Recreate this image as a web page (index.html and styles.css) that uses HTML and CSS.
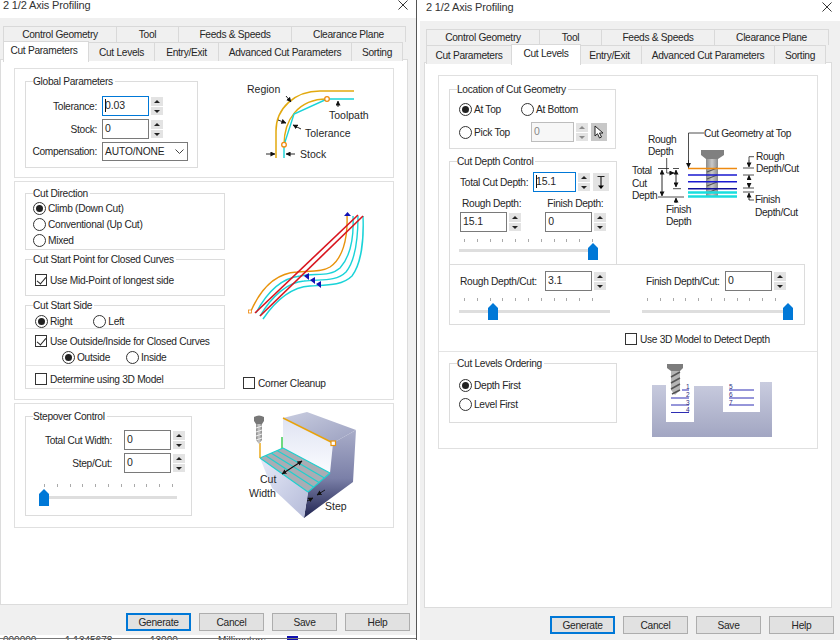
FILE: index.html
```html
<!DOCTYPE html>
<html lang="en">
<head>
<meta charset="utf-8">
<title>2 1/2 Axis Profiling</title>
<link rel="stylesheet" href="styles.css">
</head>
<body>
<div class="desktop">

  <section class="window win-a">
    <header class="titlebar"><span class="title">2 1/2 Axis Profiling</span>
      <svg class="close" viewBox="0 0 11 11"><path d="M0.5 0.5L10.5 10.5M10.5 0.5L0.5 10.5"/></svg>
    </header>
    <div class="body">
      <div class="tabs">
        <div class="tab-row row-back">
          <span class="tab t-control">Control Geometry</span><span class="tab t-tool">Tool</span><span class="tab t-feeds">Feeds &amp; Speeds</span><span class="tab t-clear">Clearance Plane</span>
        </div>
        <div class="tab-row row-front">
          <span class="tab t-cut active">Cut Parameters</span><span class="tab t-levels">Cut Levels</span><span class="tab t-entry">Entry/Exit</span><span class="tab t-adv">Advanced Cut Parameters</span><span class="tab t-sort">Sorting</span>
        </div>
      </div>
      <div class="panel panel-a">
        <div class="section s-global">
          <div class="group g-global">
            <span class="legend">Global Parameters</span>
            <div class="form-grid">
              <label>Tolerance:</label><div class="num"><span class="input focus"><i class="caret"></i>0.03</span><span class="spin"><b class="up"></b><b class="down"></b></span></div>
              <label>Stock:</label><div class="num"><span class="input">0</span><span class="spin"><b class="up"></b><b class="down"></b></span></div>
              <label>Compensation:</label><div class="select">AUTO/NONE<svg viewBox="0 0 9 5"><path d="M0.5 0.5L4.5 4.5L8.5 0.5"/></svg></div>
            </div>
          </div>
          <svg class="art art-region" viewBox="240 75 145 95">
            <defs>
              <marker id="ah" viewBox="0 0 6 6" refX="5.5" refY="3" markerWidth="5" markerHeight="5" markerUnits="userSpaceOnUse" orient="auto-start-reverse"><path d="M0 0L6 3L0 6Z" fill="#111"/></marker>
              <linearGradient id="gTop" x1="0" y1="0" x2="1" y2="1"><stop offset="0" stop-color="#c9cde0"/><stop offset="1" stop-color="#9ba0c0"/></linearGradient>
              <linearGradient id="gFace" x1="0" y1="0" x2="0" y2="1"><stop offset="0" stop-color="#dfe3f2"/><stop offset="1" stop-color="#fbfcff"/></linearGradient>
              <linearGradient id="gLow" x1="0" y1="0" x2="1" y2="1"><stop offset="0" stop-color="#e6eaf8"/><stop offset="1" stop-color="#b4bad8"/></linearGradient>
              <linearGradient id="gSide" x1="0" y1="0" x2="0" y2="1"><stop offset="0" stop-color="#a9adc9"/><stop offset="0.55" stop-color="#7b80a8"/><stop offset="1" stop-color="#1f2350"/></linearGradient>
              <linearGradient id="gBlock" x1="0" y1="0" x2="0" y2="1"><stop offset="0" stop-color="#c9ccdf"/><stop offset="1" stop-color="#a2a6c2"/></linearGradient>
              <linearGradient id="gMetal" x1="0" y1="0" x2="1" y2="0"><stop offset="0" stop-color="#8a8a8a"/><stop offset="0.5" stop-color="#c9c9c9"/><stop offset="1" stop-color="#8a8a8a"/></linearGradient>
            </defs>
            <path class="or" d="M276 158V131C276 108 295 91 320 91H354"/>
            <path class="or" d="M284 145C284 120 298 99 327 99"/>
            <path class="cy" d="M284 158V145L294 114L327 99H354"/>
            <circle class="pt" cx="284" cy="144.7" r="2.3"/><circle class="pt" cx="327" cy="99" r="2.3"/>
            <path class="ar" d="M286 96L291 102"/><path class="ar" d="M278 120L286 123"/><path class="ar" d="M301 129L293 125"/><path class="ar" d="M338 107V101"/><path class="ar" d="M266 154H275"/><path class="ar" d="M295 154H286"/>
            <text x="247" y="93">Region</text><text x="329" y="119">Toolpath</text><text x="305" y="137">Tolerance</text><text x="300" y="158">Stock</text>
          </svg>
        </div>

        <div class="section s-dir">
          <div class="col-groups">
            <div class="group g-dir">
              <span class="legend">Cut Direction</span>
              <div class="opt"><i class="radio on"></i>Climb (Down Cut)</div>
              <div class="opt"><i class="radio"></i>Conventional (Up Cut)</div>
              <div class="opt"><i class="radio"></i>Mixed</div>
            </div>
            <div class="group g-start">
              <span class="legend">Cut Start Point for Closed Curves</span>
              <div class="opt"><i class="check on"></i>Use Mid-Point of longest side</div>
            </div>
            <div class="group g-side">
              <span class="legend">Cut Start Side</span>
              <div class="side-a">
                <span class="opt"><i class="radio on"></i>Right</span><span class="opt"><i class="radio"></i>Left</span>
              </div>
              <div class="side-b">
                <div class="opt"><i class="check on"></i>Use Outside/Inside for Closed Curves</div>
                <div class="side-sub"><span class="opt"><i class="radio on"></i>Outside</span><span class="opt"><i class="radio"></i>Inside</span></div>
              </div>
              <div class="side-c"><div class="opt"><i class="check"></i>Determine using 3D Model</div></div>
            </div>
          </div>
          <div class="col-art">
            <svg class="art art-curve" viewBox="243 205 130 125">
              <path class="cy" d="M256 313C268 290 282 278 300 276C316 273 330 277 340 268C350 257 354 238 353 216"/>
              <path class="cy" d="M260 316C272 296 288 282 304 281C320 279 336 282 346 272C355 261 358 240 358 216"/>
              <path class="cy" d="M263 319C276 300 292 287 310 286C326 285 342 286 352 276C361 264 364 240 363 216"/>
              <path class="orl" d="M251 311C262 286 278 273 297 272C310 271 322 272 330 267C342 259 348 240 347 215"/>
              <rect class="sq" x="248.5" y="310" width="3" height="3"/>
              <path class="rd" d="M255 313L358 215"/><path class="rd" d="M260 316L363 216"/>
              <path class="bl" d="M347.5 212L351 216H344Z"/><path class="bl" d="M304 276L309 273V280Z"/><path class="bl" d="M310 280L315 277V284Z"/><path class="bl" d="M316 284L321 281V288Z"/>
            </svg>
            <div class="opt corner"><i class="check"></i>Corner Cleanup</div>
          </div>
        </div>

        <div class="section s-step">
          <div class="group g-step">
            <span class="legend">Stepover Control</span>
            <div class="form-grid wide">
              <label>Total Cut Width:</label><div class="num"><span class="input">0</span><span class="spin"><b class="up"></b><b class="down"></b></span></div>
              <label>Step/Cut:</label><div class="num"><span class="input">0</span><span class="spin"><b class="up"></b><b class="down"></b></span></div>
            </div>
            <div class="slider sl-step"><i class="ticks"></i><i class="track"></i><i class="thumb"></i></div>
          </div>
          <svg class="art art-stair" viewBox="240 410 125 115">
            <path fill="url(#gTop)" d="M283 418L307 412L356 430L333 443Z"/>
            <path fill="url(#gFace)" d="M283 418L333 443L330 473L283 448Z"/>
            <path fill="url(#gSide)" d="M333 443L356 430L353 482L304 518L308 492L330 473Z"/>
            <path fill="url(#gLow)" d="M260 458L308 492L304 518L272 488Z"/>
            <path fill="#a9adb4" d="M260 458L283 448L330 473L308 492Z"/>
            <path class="st" d="M260 458L308 492M265.500 455.500L313.500 487M271 453L319 482.500M277 450.500L324.500 478M283 448L330 473M260 458L283 448M308 492L330 473"/>
            <path class="orw" d="M283 418L333 443"/><rect class="sq2" x="331" y="441" width="4.5" height="4.5"/>
            <path class="orw" d="M260 443V458"/><path class="gr" d="M282 437V448"/>
            <path fill="#777" d="M254 417Q259 414 264 417V421L262 424H256L254 421Z"/>
            <path fill="url(#gMetal)" d="M256 424H262V440L259 444L256 440Z"/>
            <path class="fl" d="M256 428L262 426M256 432L262 430M256 436L262 434M256 440L262 438"/>
            <path class="ar bold" d="M282 474L302 461" marker-start="url(#ah)"/><path class="ar" d="M307 501L313 498" /><path class="ar" d="M325 490L317 495"/>
            <text x="260" y="483">Cut</text><text x="249" y="497">Width</text><text x="325" y="510">Step</text>
          </svg>
        </div>
      </div>
      <div class="actions">
        <button class="btn default">Generate</button><button class="btn">Cancel</button><button class="btn">Save</button><button class="btn">Help</button>
      </div>
    </div>
    <div class="strip"><span class="f1">000000</span><span class="f2">1.1345678</span><span class="f3">13000</span><span class="f4">Millimeters</span><i class="swatch"></i></div>
  </section>

  <section class="window win-b">
    <header class="titlebar"><span class="title">2 1/2 Axis Profiling</span>
      <svg class="close" viewBox="0 0 11 11"><path d="M0.5 0.5L10.5 10.5M10.5 0.5L0.5 10.5"/></svg>
    </header>
    <div class="body">
      <div class="tabs">
        <div class="tab-row row-back">
          <span class="tab t-control">Control Geometry</span><span class="tab t-tool">Tool</span><span class="tab t-feeds">Feeds &amp; Speeds</span><span class="tab t-clear">Clearance Plane</span>
        </div>
        <div class="tab-row row-front">
          <span class="tab t-cut">Cut Parameters</span><span class="tab t-levels active">Cut Levels</span><span class="tab t-entry">Entry/Exit</span><span class="tab t-adv">Advanced Cut Parameters</span><span class="tab t-sort">Sorting</span>
        </div>
      </div>
      <div class="panel panel-b">
        <div class="section s-levels">
          <div class="levels-top">
            <div class="levels-left">
              <div class="group g-loc">
                <span class="legend">Location of Cut Geometry</span>
                <div class="loc-row">
                  <span class="opt"><i class="radio on"></i>At Top</span><span class="opt at-bottom"><i class="radio"></i>At Bottom</span>
                </div>
                <div class="loc-row pick">
                  <span class="opt"><i class="radio"></i>Pick Top</span>
                  <div class="num pick-num"><span class="input off">0</span><span class="spin off"><b class="up"></b><b class="down"></b></span></div>
                  <span class="tool-btn dark"><svg viewBox="0 0 12 15"><path d="M2 1V11L4.5 8.7L6.5 13L8.5 12L6.5 8H10Z"/></svg></span>
                </div>
              </div>
              <div class="group g-depth">
                <span class="legend">Cut Depth Control</span>
                <div class="depth-total">
                  <label>Total Cut Depth:</label>
                  <div class="num"><span class="input focus short"><i class="caret"></i>15.1</span><span class="spin"><b class="up"></b><b class="down"></b></span></div>
                  <span class="tool-btn"><svg viewBox="0 0 12 15"><path d="M2.5 1.5H9.5M6 1.5V11" class="tline"/><path d="M3 10.5H9L6 14Z"/></svg></span>
                </div>
                <div class="depth-pair">
                  <div class="stack"><label>Rough Depth:</label><div class="num"><span class="input">15.1</span><span class="spin"><b class="up"></b><b class="down"></b></span></div></div>
                  <div class="stack"><label>Finish Depth:</label><div class="num"><span class="input">0</span><span class="spin"><b class="up"></b><b class="down"></b></span></div></div>
                </div>
                <div class="slider sl-depth"><i class="ticks"></i><i class="track"></i><i class="thumb"></i></div>
              </div>
            </div>
            <svg class="art art-depth" viewBox="625 125 190 110">
              <rect fill="url(#gMetal)" x="705" y="158" width="12" height="38"/>
              <path fill="#808080" d="M700 150H723V155L717 159H705L700 155Z"/>
              <path class="fl2" d="M706 172L716 168M706 179L716 175M706 186L716 182M706 193L716 189"/>
              <path class="l-cy" d="M687 192.500H736M687 196.500H736"/>
              <path class="l-or" d="M687 168.500H736"/>
              <path class="l-bl" d="M687 175H736M687 181.700H736"/><path class="l-nv" d="M687 188.700H736"/>
              <path class="th" d="M657 168.500H668M672 168.500H678M672 188.700H680M657 197H683M665.700 158V173H670M703 133H687.500V160"/>
              <path class="ar" d="M661 170V196" marker-start="url(#ah)"/>
              <path class="ar" d="M675 170V187" marker-start="url(#ah)"/>
              <path class="ar" d="M669 173H673"/><path class="ar" d="M687.500 160V167.500"/><path class="ar" d="M675 203V198"/>
              <path class="th" d="M742 168H753M742 175H753M742 188H753M742 192H753M753 156.700H748V160M748 200H753"/>
              <path class="ar" d="M748 160V167"/><path class="ar" d="M748 178V175.500" /><path class="ar" d="M748 184V187.500"/><path class="ar" d="M748 200V193"/>
              <g class="tight">
                <text x="703" y="137">Cut Geometry at Top</text>
                <text x="647" y="143">Rough</text><text x="647" y="155">Depth</text>
                <text x="631" y="174">Total</text><text x="631" y="187">Cut</text><text x="631" y="199">Depth</text>
                <text x="665" y="213">Finish</text><text x="665" y="225">Depth</text>
                <text x="755" y="160">Rough</text><text x="755" y="172">Depth/Cut</text>
                <text x="754" y="203">Finish</text><text x="754" y="216">Depth/Cut</text>
              </g>
            </svg>
          </div>
          <div class="group g-cut">
            <div class="cut-col">
              <div class="cut-row"><label>Rough Depth/Cut:</label><div class="num"><span class="input">3.1</span><span class="spin"><b class="up"></b><b class="down"></b></span></div></div>
              <div class="slider sl-rough"><i class="ticks"></i><i class="track"></i><i class="thumb"></i></div>
            </div>
            <div class="cut-col">
              <div class="cut-row"><label>Finish Depth/Cut:</label><div class="num"><span class="input">0</span><span class="spin"><b class="up"></b><b class="down"></b></span></div></div>
              <div class="slider sl-finish"><i class="ticks"></i><i class="track"></i><i class="thumb"></i></div>
            </div>
          </div>
          <div class="opt detect"><i class="check"></i>Use 3D Model to Detect Depth</div>
          <div class="levels-bottom">
            <div class="group g-order">
              <span class="legend">Cut Levels Ordering</span>
              <div class="opt"><i class="radio on"></i>Depth First</div>
              <div class="opt"><i class="radio"></i>Level First</div>
            </div>
            <svg class="art art-pocket" viewBox="650 362 125 78">
              <path fill="url(#gBlock)" d="M652 386H666V423H694V387H723V413H760V383H772V438H652Z"/>
              <path fill="#7c7c7c" d="M667 365H683V369L680 372H671L667 369Z"/>
              <path fill="#b5b5b5" d="M671 372H680V391L675 396L671 391Z"/>
              <path class="fl3" d="M671 378L680 373M671 384L680 379M671 390L680 385M672 395L680 391"/>
              <path class="l-th" d="M682 391H689M671 399H689M671 406H689M671 413.500H689M729 391H754M729 399H754M729 406H754"/>
              <text class="mini" x="686" y="390">1</text><text class="mini" x="686" y="398">2</text><text class="mini" x="686" y="405.500">3</text><text class="mini" x="686" y="412.500">4</text>
              <text class="mini" x="729" y="390">5</text><text class="mini" x="729" y="398">6</text><text class="mini" x="729" y="405.500">7</text>
            </svg>
          </div>
        </div>
      </div>
      <div class="actions">
        <button class="btn default">Generate</button><button class="btn">Cancel</button><button class="btn">Save</button><button class="btn">Help</button>
      </div>
    </div>
  </section>

</div>
</body>
</html>
```

FILE: styles.css
```css
* { box-sizing: border-box; }
html, body { margin: 0; padding: 0; }
body { background: #fff; font-family: "Liberation Sans", Arial, sans-serif; font-size: 10.2px; letter-spacing: -0.3px; color: #262626; }
.desktop { position: relative; width: 840px; height: 640px; overflow: hidden; }

/* windows on the desktop */
.window { position: absolute; display: flex; flex-direction: column; }
.win-a { left: 0; top: 0; width: 417px; height: 640px; border-right: 1px solid #555; }
.win-b { left: 420px; top: 3px; width: 420px; height: 637px; padding-left: 0; }

.titlebar { height: 18px; flex: none; display: flex; align-items: center; justify-content: space-between; background: #fff; padding: 0 8px 8px 3px; }
.win-b .titlebar { padding: 0 8px 10px 6px; }
.title { font-size: 11px; letter-spacing: -0.15px; color: #333; }
.close { width: 10px; height: 10px; }
.close path { stroke: #222; stroke-width: 1; fill: none; }

.body { flex: 1; background: #f0f0f0; display: flex; flex-direction: column; }
.win-b .body { padding-left: 4px; }

/* tabs */
.tabs { padding: 8px 0 0 3px; height: 42px; flex: none; position: relative; z-index: 1; }
.win-b .tabs { padding-left: 2px; }
.tab-row { display: flex; }
.row-back { height: 16px; }
.row-front { height: 19px; }
.tab { display: flex; align-items: center; justify-content: center; border: 1px solid #d9d9d9; border-left-width: 0; background: #f0f0f0; color: #262626; }
.tab:first-child { border-left-width: 1px; }
.row-back .tab { border-bottom: 0; }
.row-front .tab { border-bottom: 0; }
.tab.active { background: #fff; height: 21px; margin-top: -1px; padding: 0 0 3px; position: relative; z-index: 2; border-left-width: 1px; }
.t-control { width: 114px; } .t-tool { width: 62px; } .t-feeds { width: 113px; } .t-clear { width: 114px; }
.t-cut { width: 86px; } .t-levels { width: 66px; } .t-entry { width: 64px; } .t-adv { width: 133px; } .t-sort { width: 51px; }
.t-cut.active { padding-right: 4px; }
.t-levels.active { width: 70px; margin-left: -1px; margin-right: -3px; }

.panel { background: #fff; width: 408px; height: 546px; border: 1px solid #dcdcdc; padding: 8px 0 0 13px; display: flex; flex-direction: column; gap: 3px; margin-top: -1px; }
.panel-b { padding-top: 12px; }

.section { border: 1px solid #e0e0e0; width: 380px; display: flex; }
.s-global { height: 110px; padding: 12px 0 0 10px; gap: 42px; }
.s-dir { height: 219px; padding: 11px 0 0 10px; gap: 18px; }
.s-step { height: 125px; padding: 12px 0 0 10px; gap: 48px; }
.s-levels { height: 374px; padding: 13px 0 0 10px; flex-direction: column; }

/* group boxes */
.group { position: relative; border: 1px solid #dcdcdc; flex: none; }
.legend { position: absolute; top: -6px; left: 7px; background: #fff; padding: 0 2px 0 0; line-height: 11px; }

/* controls */
label { white-space: nowrap; }
.opt { display: flex; align-items: center; height: 16px; white-space: nowrap; }
.radio { flex: none; width: 13px; height: 13px; border: 1px solid #333; border-radius: 50%; background: #fff; margin-right: 2px; position: relative; display: block; }
.radio.on::after { content: ""; position: absolute; left: 2px; top: 2px; width: 7px; height: 7px; border-radius: 50%; background: #222; }
.check { flex: none; width: 12px; height: 12px; border: 1px solid #333; background: #fff; margin-right: 3px; position: relative; display: block; }
.check.on::after { content: ""; position: absolute; left: 3px; top: 0; width: 4px; height: 8px; border: solid #222; border-width: 0 1.2px 1.2px 0; transform: rotate(40deg); }

.num { display: flex; align-items: stretch; gap: 2px; height: 20px; }
.input { display: block; width: 47px; height: 20px; border: 1px solid #7a7a7a; background: #fff; padding: 1px 2px; line-height: 14px; font-size: 10.500px; letter-spacing: -0.1px; position: relative; }
.input.short { width: 43px; }
.input.focus { border-color: #0078d7; }
.caret { display: inline-block; width: 1px; height: 13px; background: #111; vertical-align: -3px; margin-right: -1px; }
.input.off { width: 43px; border-color: #bdbdbd; color: #888; background: #f7f7f7; }
.spin { width: 12px; height: 18px; margin-top: 1px; display: flex; flex-direction: column; gap: 1px; flex: none; }
.spin b { flex: 1; background: #e3e3e3; position: relative; display: block; }
.spin b::after { content: ""; position: absolute; left: 3px; top: 3px; border: 3px solid transparent; border-top-width: 0; border-bottom: 3px solid #222; }
.spin b.down::after { border-bottom-width: 0; border-top: 3px solid #222; border-bottom-color: transparent; }
.spin.off b::after { border-bottom-color: #8a8a8a; }
.spin.off b.down::after { border-top-color: #8a8a8a; border-bottom-color: transparent; }

.select { grid-column: 2; width: 86px; height: 19px; border: 1px solid #7a7a7a; background: #fff; display: flex; align-items: center; justify-content: space-between; padding: 0 3px 0 2px; font-size: 10.200px; letter-spacing: -0.1px; }
.select svg { width: 9px; height: 5px; }
.select path { fill: none; stroke: #444; stroke-width: 1; }

.slider { position: relative; height: 22px; }
.ticks { position: absolute; left: 5px; right: 0; top: 0; height: 3px; background: repeating-linear-gradient(90deg, #aaa 0 1px, transparent 1px 12.800px); }
.track { position: absolute; left: 0; right: 0; top: 12px; height: 3px; background: #dedede; }
.thumb { position: absolute; top: 5px; left: 0; width: 10px; height: 17px; background: #0078d7; clip-path: polygon(50% 0, 100% 30%, 100% 100%, 0 100%, 0 30%); }

.btn { font: inherit; letter-spacing: inherit; width: 65px; height: 18px; border: 1px solid #adadad; background: #e1e1e1; color: #262626; padding: 0; }
.btn.default { border: 2px solid #0078d7; }
.actions { display: flex; gap: 8px; padding: 8px 0 0 126px; }

/* left dialog */
.form-grid { display: grid; grid-template-columns: 71px auto; column-gap: 5px; row-gap: 3px; align-items: center; justify-items: start; }
.form-grid label { justify-self: end; }
.g-global { width: 173px; height: 87px; padding-top: 14px; }
.form-grid.wide { grid-template-columns: 86px auto; column-gap: 12px; }
.col-groups { display: flex; flex-direction: column; gap: 9px; }
.g-dir { width: 200px; height: 57px; padding: 6px 0 0 7px; }
.g-start { width: 200px; height: 37px; padding: 12px 0 0 9px; }
.g-side { width: 200px; height: 84px; }
.side-a { height: 23px; display: flex; gap: 21px; padding: 7px 0 0 9px; border-bottom: 1px solid #e4e4e4; }
.side-a .opt { height: 16px; }
.side-b { height: 37px; padding: 4px 0 0 9px; border-bottom: 1px solid #e4e4e4; }
.side-sub { display: flex; gap: 16px; padding-left: 27px; }
.side-c { padding: 5px 0 0 9px; }
.col-art { width: 135px; height: 196px; display: flex; flex-direction: column; justify-content: space-between; }
.art-curve { width: 130px; height: 125px; margin-top: 12px; }
.corner { height: 12px; }

.g-step { width: 167px; height: 100px; padding-top: 13px; }
.sl-step { width: 138px; margin: 11px 0 0 13px; }
.sl-step .ticks { right: 4px; }

/* right dialog */
.levels-top { display: flex; gap: 9px; }
.levels-left { display: flex; flex-direction: column; gap: 12px; }
.g-loc { width: 167px; height: 60px; padding: 11px 0 0 9px; }
.loc-row { display: flex; height: 16px; align-items: center; }
.at-bottom { margin-left: 20px; }
.loc-row.pick { margin-top: 7px; }
.loc-row.pick > .opt { width: 72px; }
.tool-btn { width: 16px; height: 18px; margin-left: 3px; background: #e3e3e3; display: flex; align-items: center; justify-content: center; flex: none; }
.tool-btn.dark { background: #c8c8c8; }
.tool-btn svg { width: 12px; height: 15px; }
.tool-btn.dark path { fill: #fff; stroke: #222; stroke-width: 1; }
.tool-btn .tline { fill: none; stroke: #222; stroke-width: 1.2; }
.g-depth { width: 168px; height: 103px; border-bottom: 0; padding-top: 10px; }
.depth-total { display: flex; align-items: center; padding-left: 10px; height: 20px; }
.depth-total label { width: 73px; }
.depth-pair { display: flex; padding: 3px 0 0 10px; gap: 24px; }
.stack { display: flex; flex-direction: column; gap: 1px; }
.stack label { height: 16px; line-height: 17px; padding-left: 2px; }
.sl-depth { width: 139px; margin: 8px 0 0 9px; }
.sl-depth .thumb { left: 129px; top: 3px; }
.sl-depth .ticks { right: 4px; top: -1px; }
.sl-depth .track { top: 9px; }
.art-depth { width: 190px; height: 110px; margin-top: 36px; flex: none; }
.g-cut { width: 356px; height: 61px; display: flex; padding: 6px 0 0 10px; gap: 36px; }
.cut-row { display: flex; align-items: center; height: 20px; }
.cut-col:first-child .cut-row label { width: 85px; }
.cut-col:last-child .cut-row label { width: 79px; }
.cut-col:last-child .cut-row { width: 160px; }
.slider.sl-rough { width: 151px; margin: 7px 0 0 -1px; }
.sl-rough .thumb { left: 29px; }
.sl-rough .ticks { right: 5px; }
.slider.sl-finish { width: 151px; margin: 7px 0 0 -4px; }
.sl-finish .thumb { left: 141px; }
.sl-finish .ticks { right: 5px; }
.detect { margin: 6px 0 0 176px; height: 16px; }
.levels-bottom { display: flex; border-top: 1px solid #e4e4e4; margin: 4px 0 0 -10px; padding: 11px 0 0 10px; gap: 33px; width: 378px; }
.g-order { width: 168px; height: 60px; padding: 13px 0 0 9px; display: flex; flex-direction: column; gap: 3px; }
.art-pocket { width: 125px; height: 78px; margin-top: -2px; }

/* left window's clipped edge of what lies behind it */
.strip { height: 5px; flex: none; background: #fff; overflow: hidden; display: flex; position: relative; line-height: 11px; padding-top: 1px; }
.strip::after { content: ""; position: absolute; left: 0; right: 0; top: 3px; height: 1px; background: #777; }
.strip span { position: absolute; top: 0; font-size: 10px; letter-spacing: 0; color: #333; }
.f1 { left: 3px; } .f2 { left: 65px; } .f3 { left: 150px; } .f4 { left: 218px; }
.swatch { position: absolute; left: 287px; top: 1px; width: 11px; height: 4px; background: #1010b0; }

/* diagrams */
.art { display: block; flex: none; }
.art-region { width: 145px; height: 95px; margin-top: -6px; }
.art-stair { width: 125px; height: 115px; margin-top: -6px; }
.art text { font-family: "Liberation Sans", Arial, sans-serif; font-size: 10.500px; letter-spacing: 0; fill: #262626; }
.art .tight text { font-size: 10.200px; letter-spacing: -0.35px; }
.art text.mini { font-size: 6.500px; fill: #2d2d80; }
.or { fill: none; stroke: #e2a90f; stroke-width: 1.5; }
.cy { fill: none; stroke: #19d3d8; stroke-width: 1.4; }
.orl { fill: none; stroke: #e8930c; stroke-width: 1.4; }
.rd { fill: none; stroke: #d9151f; stroke-width: 1.600; }
.bl { fill: #1212b4; }
.pt { fill: #fff; stroke: #f08a0e; stroke-width: 1.300; }
.sq { fill: #fff; stroke: #f08a0e; stroke-width: 0.8; }
.sq2 { fill: #fff; stroke: #e8930c; stroke-width: 1.200; }
.ar { fill: none; stroke: #111; stroke-width: 0.9; marker-end: url(#ah); }
.ar.bold { stroke-width: 1.100; }
.st { fill: none; stroke: #1fd0cf; stroke-width: 1.200; }
.orw { fill: none; stroke: #e8a30c; stroke-width: 1.400; }
.gr { fill: none; stroke: #31c94a; stroke-width: 1.400; }
.fl { fill: none; stroke: #eee; stroke-width: 1; }
.fl2 { fill: none; stroke: #555; stroke-width: 1.300; }
.fl3 { fill: none; stroke: #555; stroke-width: 1.500; }
.th { fill: none; stroke: #222; stroke-width: 0.8; }
.l-or { fill: none; stroke: #ee8a10; stroke-width: 1.600; }
.l-bl { fill: none; stroke: #1a1ad0; stroke-width: 1.600; }
.l-nv { fill: none; stroke: #10109a; stroke-width: 1.600; }
.l-cy { fill: none; stroke: #19dede; stroke-width: 2.400; }
.l-th { fill: none; stroke: #2d2db4; stroke-width: 1; }
```
